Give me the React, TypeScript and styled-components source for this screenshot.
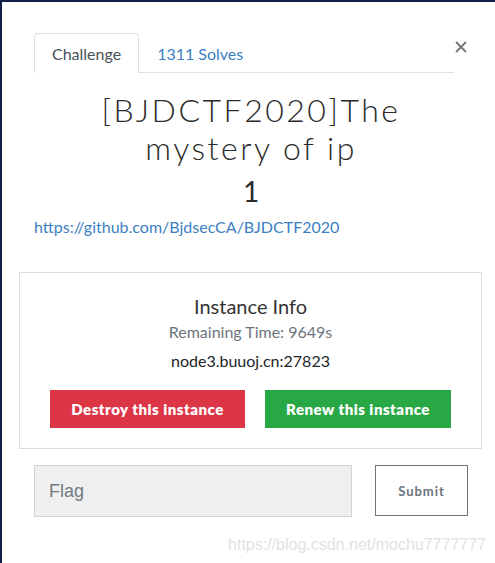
import React from 'react';
import styled, {createGlobalStyle} from "styled-components";

const GlobalStyle = createGlobalStyle`
  html, body {
    margin: 0;
    padding: 0;
    background: #14204a;
  }
  body {
    font-family: Lato, "Open Sans", sans-serif;
    color: #212529;
  }
`;

const Page = styled.div`
  width: 495px;
  height: 563px;
  overflow: hidden;
  position: relative;
  box-sizing: border-box;
  padding: 2px 0 0 2px;
`;

const Modal = styled.div`
  background: #fff;
  height: 100%;
  box-sizing: border-box;
  padding: 31px 27px 0 32px;
`;

const Header = styled.div`
  display: flex;
  align-items: flex-start;
`;

const Tabs = styled.div`
  display: flex;
  width: 420px;
  border-bottom: 1px solid #dee2e6;
`;

const Tab = styled.div<{ $active?: boolean }>`
  height: 40px;
  box-sizing: border-box;
  padding: 0 17px;
  display: flex;
  align-items: center;
  font-size: 16px;
  margin-bottom: -1px;
  border: 1px solid ${p => (p.$active ? "#dee2e6" : "transparent")};
  border-bottom-color: ${p => (p.$active ? "#fff" : "transparent")};
  border-radius: 4px 4px 0 0;
  color: ${p => (p.$active ? "#495057" : "#3b7fc2")};
  background: ${p => (p.$active ? "#fff" : "transparent")};
`;

const Close = styled.button`
  border: 0;
  background: none;
  padding: 0;
  margin: 8px 0 0 1px;
  width: 12px;
  height: 12px;
  display: flex;
  cursor: pointer;
`;

const Title = styled.h2`
  margin: 18px 0 0;
  text-align: center;
  font-family: Lato, sans-serif;
  font-weight: 300;
  font-size: 32px;
  line-height: 38px;
  letter-spacing: 2.5px;
  color: #2b2b2b;
  padding: 0 60px;
`;

const Value = styled.h4`
  margin: 5px 0 0;
  text-align: center;
  font-weight: 400;
  font-size: 28px;
  line-height: 38px;
  color: #2b2b2b;
`;

const Link = styled.a`
  display: block;
  margin-top: 7px;
  font-size: 16px;
  line-height: 20px;
  color: #3b7fc2;
  text-decoration: none;
`;

const InstanceBox = styled.div`
  margin: 35px -14px 0 -15px;
  border: 1px solid #dcdcdc;
  padding: 21px 0 20px;
  display: flex;
  flex-direction: column;
  align-items: center;
`;

const InstanceTitle = styled.div`
  font-size: 20px;
  line-height: 24px;
  color: #333;
`;

const Muted = styled.div`
  margin-top: 4px;
  font-size: 16px;
  line-height: 20px;
  color: #6c757d;
`;

const Host = styled.div`
  margin-top: 9px;
  font-size: 16px;
  line-height: 20px;
  color: #212529;
`;

const ButtonRow = styled.div`
  display: flex;
  gap: 20px;
  margin-top: 19px;
`;

const ActionButton = styled.button<{ $color: string; $width: number }>`
  width: ${p => p.$width}px;
  height: 38px;
  border: 0;
  border-radius: 0;
  background: ${p => p.$color};
  color: #fff;
  font-family: Lato, sans-serif;
  font-weight: 800;
  font-size: 15px;
  letter-spacing: 0.5px;
  cursor: pointer;
`;

const FlagRow = styled.div`
  display: flex;
  justify-content: space-between;
  margin-top: 16px;
`;

const FlagInput = styled.input`
  width: 318px;
  height: 52px;
  box-sizing: border-box;
  background: #efefef;
  border: 1px solid #d0d4d9;
  padding: 0 14px;
  font-family: "Liberation Sans", Arial, sans-serif;
  font-size: 18px;
  outline: none;
  &::placeholder {
    color: #737b82;
  }
`;

const SubmitButton = styled.button`
  width: 93px;
  height: 51px;
  box-sizing: border-box;
  background: #fff;
  border: 1px solid #6c757d;
  color: #6c757d;
  font-family: Lato, sans-serif;
  font-weight: 700;
  font-size: 13px;
  letter-spacing: 1px;
  cursor: pointer;
`;

const Watermark = styled.div`
  position: absolute;
  right: 9px;
  bottom: 9px;
  font-family: "Liberation Sans", Arial, sans-serif;
  font-size: 16px;
  color: #e2e2e2;
  pointer-events: none;
`;

const CloseIcon = () => (
  <svg width="12" height="12" viewBox="0 0 12 12">
    <path d="M1 1 L11 11 M11 1 L1 11" stroke="#777" strokeWidth="1.8" fill="none"/>
  </svg>
);

const App: React.FC = () => {
  return (
    <Page>
      <GlobalStyle/>
      <Modal>
        <Header>
          <Tabs>
            <Tab $active>Challenge</Tab>
            <Tab>1311 Solves</Tab>
          </Tabs>
          <Close aria-label="Close"><CloseIcon/></Close>
        </Header>
        <Title>[BJDCTF2020]The mystery of ip</Title>
        <Value>1</Value>
        <Link href="#">https://github.com/BjdsecCA/BJDCTF2020</Link>
        <InstanceBox>
          <InstanceTitle>Instance Info</InstanceTitle>
          <Muted>Remaining Time: 9649s</Muted>
          <Host>node3.buuoj.cn:27823</Host>
          <ButtonRow>
            <ActionButton $color="#dc3545" $width={195}>Destroy this instance</ActionButton>
            <ActionButton $color="#28a745" $width={186}>Renew this instance</ActionButton>
          </ButtonRow>
        </InstanceBox>
        <FlagRow>
          <FlagInput placeholder="Flag"/>
          <SubmitButton>Submit</SubmitButton>
        </FlagRow>
      </Modal>
      <Watermark>https://blog.csdn.net/mochu7777777</Watermark>
    </Page>
  );
};

export default App;
